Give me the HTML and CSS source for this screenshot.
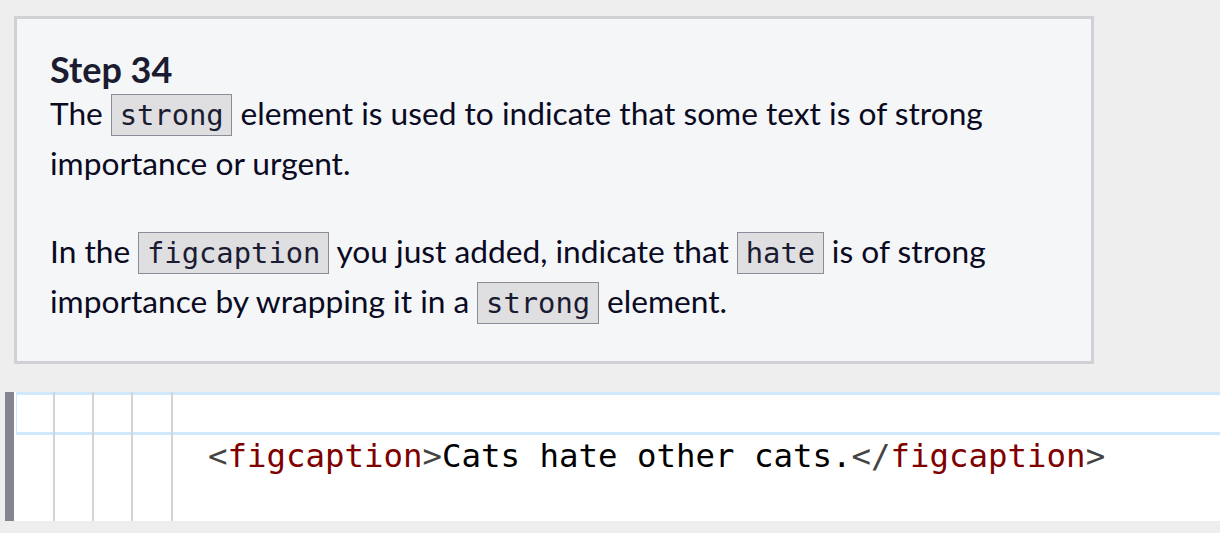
FILE: index.html
```html
<!DOCTYPE html>
<html lang="en">
<head>
<meta charset="utf-8">
<title>Step 34</title>
<link rel="stylesheet" href="styles.css">
</head>
<body>
  <section class="step-box">
    <h2 class="step-title">Step 34</h2>
    <p class="step-text">The <code class="ic">strong</code> element is used to indicate that some text is of strong importance or urgent.</p>
    <p class="step-text">In the <code class="ic">figcaption</code> you just added, indicate that <code class="ic">hate</code> is of strong importance by wrapping it in a <code class="ic">strong</code> element.</p>
  </section>

  <div class="editor">
    <div class="editor-bar"></div>
    <div class="editor-main">
      <div class="line line-active"></div>
      <div class="line"><span class="code">        <span class="delim">&lt;</span><span class="tag">figcaption</span><span class="delim">&gt;</span>Cats hate other cats.<span class="delim">&lt;/</span><span class="tag">figcaption</span><span class="delim">&gt;</span></span></div>
      <div class="line"></div>
      <div class="guides" aria-hidden="true">
        <span class="guide g1"></span>
        <span class="guide g2"></span>
        <span class="guide g3"></span>
        <span class="guide g4"></span>
      </div>
    </div>
  </div>
</body>
</html>
```
FILE: styles.css
```css
html, body {
  margin: 0;
  padding: 0;
  background: #eeeeee;
}

body {
  padding-top: 16px;
  font-family: Lato, "Noto Sans", sans-serif;
  color: #0a0a23;
}

.step-box {
  box-sizing: border-box;
  width: 1080px;
  margin-left: 14px;
  border: 3px solid #d0d0d5;
  background: #f5f6f7;
  padding: 31px 32px 35px 33px;
}

.step-title {
  margin: 0;
  font-size: 36px;
  font-weight: 700;
  line-height: 38px;
  color: #1b1b32;
}

.step-text {
  margin: 0 0 38px 0;
  font-size: 31.7px;
  line-height: 50px;
}

.step-text:last-child {
  margin-bottom: 0;
}

.ic {
  font-family: "DejaVu Sans Mono", monospace;
  font-size: 28.8px;
  line-height: 1;
  color: #1b1b32;
  background: #dfdfe2;
  border: 1px solid #8b8b99;
  padding: 3.4px 7.7px;
}

.editor {
  display: flex;
  margin: 28px 0 0 5px;
  height: 129px;
}

.editor-bar {
  width: 9px;
  background: #858591;
  flex: none;
}

.editor-main {
  position: relative;
  flex: 1;
  background: #ffffff;
  overflow: hidden;
}

.line {
  height: 43px;
  box-sizing: border-box;
  padding-left: 38px;
  font-family: "DejaVu Sans Mono", monospace;
  font-size: 32.4px;
  line-height: 43px;
  white-space: pre;
  color: #000000;
}

.line-active {
  margin-left: 2px;
  border-top: 3px solid #cfe8fc;
  border-bottom: 3px solid #cfe8fc;
  border-left: 1px solid #cfe8fc;
}

.delim {
  color: #444444;
}

.tag {
  color: #800000;
}

.guides {
  position: absolute;
  inset: 0;
  pointer-events: none;
}

.guide {
  position: absolute;
  top: 0;
  bottom: 0;
  width: 2px;
  background: #d4d4d4;
}

.g1 { left: 39px; }
.g2 { left: 78.2px; }
.g3 { left: 117.4px; }
.g4 { left: 156.6px; }
```
